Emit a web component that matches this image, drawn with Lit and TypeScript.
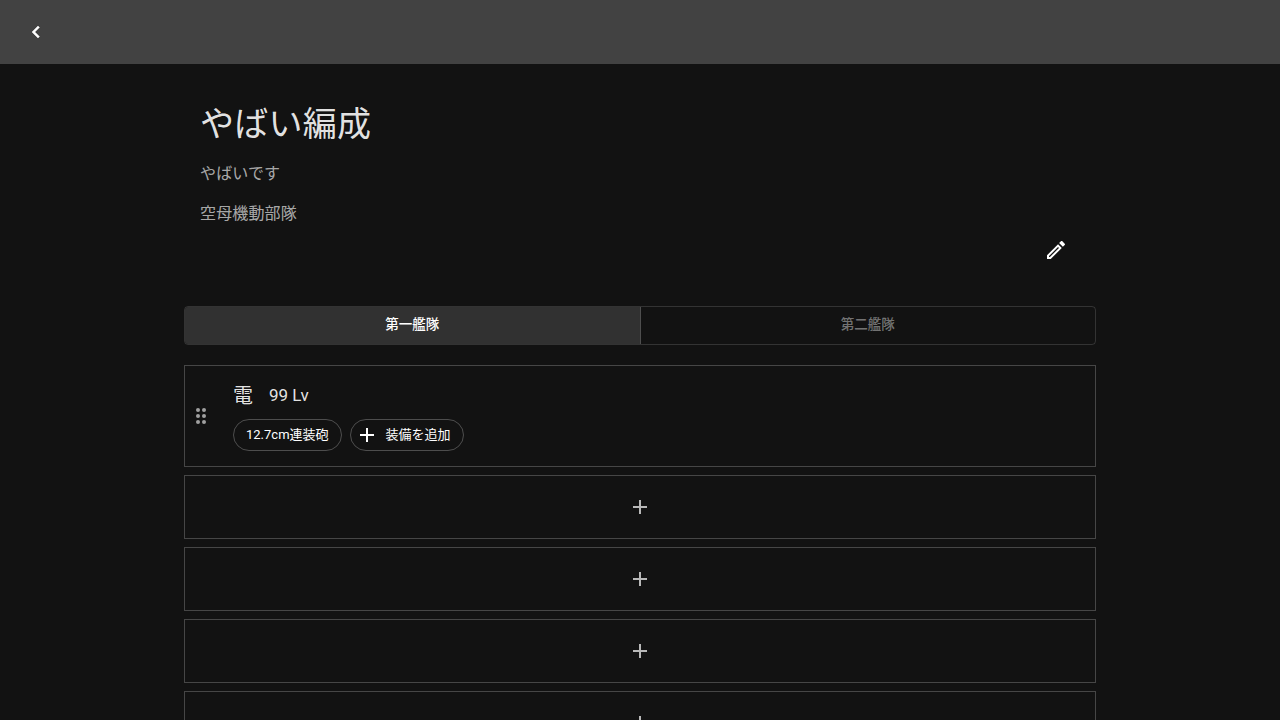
import { LitElement, html, css } from "lit";
import { customElement } from "lit/decorators.js";

const plus = () => html`<svg viewBox="0 0 24 24"><path fill="currentColor" d="M19 13h-6v6h-2v-6H5v-2h6V5h2v6h6v2z"/></svg>`;

@customElement("app-root")
export class AppRoot extends LitElement {
  static styles = css`
    :host { display: block; height: 720px; overflow: hidden; background: #121212; color: #fff;
      font-family: Roboto, "Noto Sans CJK JP", sans-serif; }
    .bar { height: 64px; background: #424242; display: flex; align-items: center; padding-left: 24px; box-sizing: border-box; }
    .bar svg { width: 24px; height: 24px; display: block; color: #fff; }
    .bar path { stroke: currentColor; stroke-width: .5; }
    main { width: 912px; margin: 0 auto; }
    .info { padding: 38px 16px 0; height: 242px; box-sizing: border-box; position: relative; }
    h1 { margin: 0; font-size: 34px; font-weight: 400; line-height: 44px; letter-spacing: .25px; color: rgba(255,255,255,.9); }
    p { margin: 0; font-size: 16px; line-height: 24px; letter-spacing: .15px; color: rgba(255,255,255,.65); }
    .desc { margin-top: 16px; }
    .kind { margin-top: 16px; }
    .edit { position: absolute; right: 28px; top: 174px; width: 24px; height: 24px; color: #fff; }
    .tabs { display: flex; height: 39px; border: 1px solid rgba(255,255,255,.14); border-radius: 4px; overflow: hidden; box-sizing: border-box; }
    .tab { flex: 1; display: flex; align-items: center; justify-content: center; font-size: 13.5px; line-height: 16px; padding-bottom: 4px; box-sizing: border-box; font-weight: 500; color: rgba(255,255,255,.42); }
    .tab.on { background: #313131; color: #fff; border-right: 1px solid rgba(255,255,255,.14); }
    .rows { margin-top: 20px; display: flex; flex-direction: column; gap: 8px; }
    .row { border: 1px solid rgba(255,255,255,.22); box-sizing: border-box; }
    .ship { height: 102px; display: flex; align-items: center; }
    .grip { width: 24px; height: 24px; margin-left: 4px; color: rgba(255,255,255,.6); flex: none; }
    .body { margin-left: 20px; padding-top: 1px; }
    .name { display: flex; align-items: center; height: 24px; font-size: 20px; color: rgba(255,255,255,.9); }
    .name .lv { margin-left: 16px; font-size: 17px; }
    .chips { display: flex; gap: 8px; margin-top: 12px; }
    .chip { height: 32px; box-sizing: border-box; border: 1px solid rgba(255,255,255,.25); border-radius: 16px; padding: 0 12px 2px; display: flex; align-items: center; font-size: 13px; color: #fff; }
    .chip svg { width: 24px; height: 24px; margin: 2px 7px 0 -8px; }
    .empty { height: 64px; display: flex; align-items: center; justify-content: center; color: rgba(255,255,255,.7); }
    .empty svg { width: 24px; height: 24px; }
  `;

  render() {
    return html`
      <div class="bar">
        <svg viewBox="0 0 24 24"><path fill="currentColor" d="M15.41 16.58 10.83 12l4.58-4.59L14 6l-6 6 6 6z"/></svg>
      </div>
      <main>
        <section class="info">
          <h1>やばい編成</h1>
          <p class="desc">やばいです</p>
          <p class="kind">空母機動部隊</p>
          <svg class="edit" viewBox="0 0 24 24"><path fill="currentColor" d="M20.71 7.04c.39-.39.39-1.04 0-1.41l-2.34-2.34c-.37-.39-1.02-.39-1.41 0l-1.84 1.83 3.75 3.75M3 17.25V21h3.75L17.81 9.93l-3.75-3.75L3 17.25zM5.92 19H5v-.92l9.06-9.06.92.92L5.92 19z"/></svg>
        </section>
        <div class="tabs">
          <div class="tab on">第一艦隊</div>
          <div class="tab">第二艦隊</div>
        </div>
        <div class="rows">
          <div class="row ship">
            <svg class="grip" viewBox="0 0 24 24" fill="currentColor">
              <circle cx="9" cy="6" r="2"/><circle cx="15" cy="6" r="2"/>
              <circle cx="9" cy="12" r="2"/><circle cx="15" cy="12" r="2"/>
              <circle cx="9" cy="18" r="2"/><circle cx="15" cy="18" r="2"/>
            </svg>
            <div class="body">
              <div class="name"><span>電</span><span class="lv">99 Lv</span></div>
              <div class="chips">
                <div class="chip">12.7cm連装砲</div>
                <div class="chip">${plus()}装備を追加</div>
              </div>
            </div>
          </div>
          ${[0, 1, 2, 3].map(() => html`<div class="row empty">${plus()}</div>`)}
        </div>
      </main>
    `;
  }
}
